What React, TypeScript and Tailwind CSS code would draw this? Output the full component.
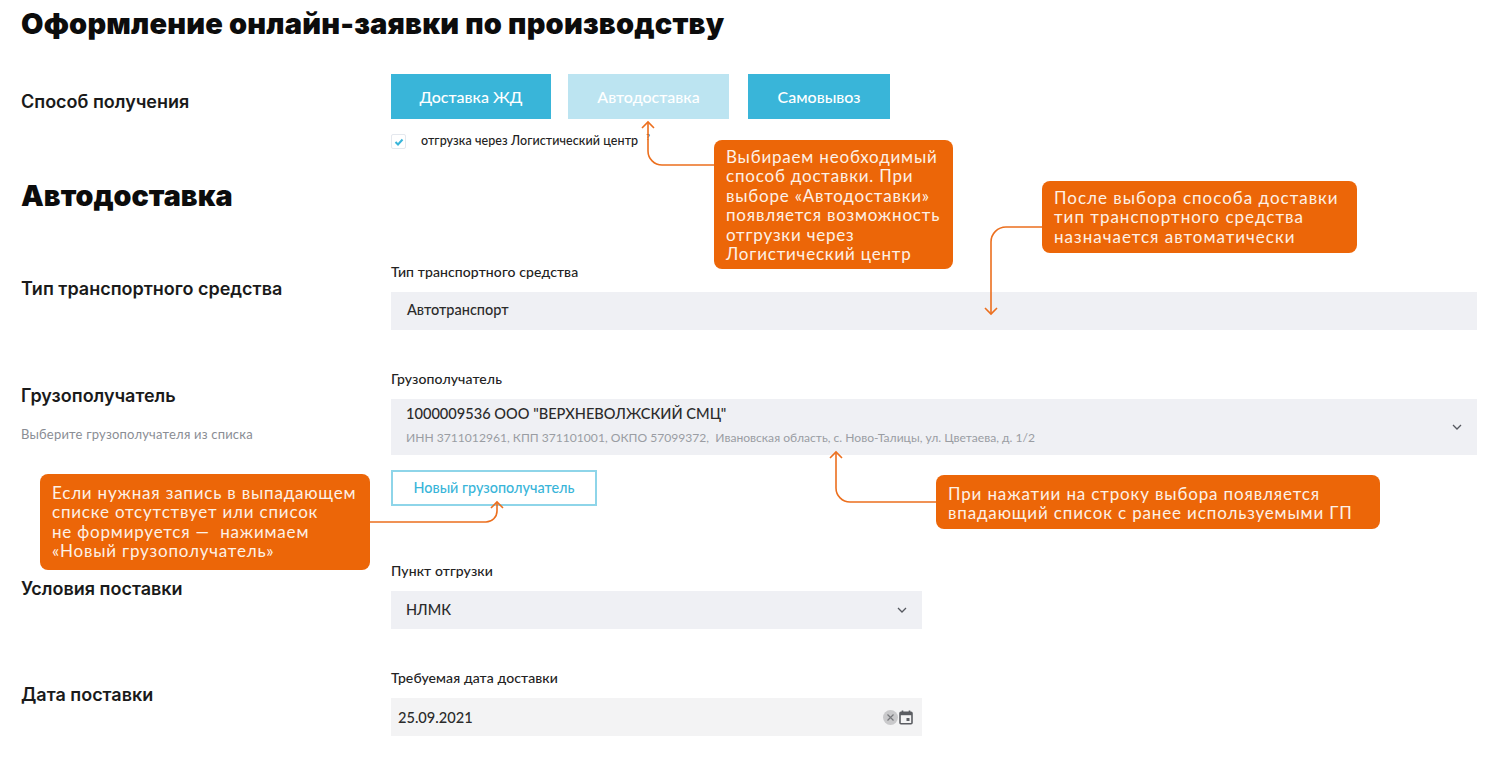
import React from "react";

const font = { fontFamily: '"Lato", "Noto Sans", sans-serif' };

function Callout({ className, children }: { className: string; children: React.ReactNode }) {
  return (
    <div className={`absolute rounded-lg bg-[#ec6608] pl-3 text-[17px] leading-[19.4px] whitespace-nowrap text-[#fdf1e6] ${className}`}>
      {children}
    </div>
  );
}

function Row({ label, sub, top, children }: { label: string; sub?: string; top: string; children: React.ReactNode }) {
  return (
    <div className="flex">
      <div className={`w-[370px] shrink-0 ${top}`}>
        <div className="font-['Inter'] text-[18px] leading-[22px] font-semibold text-[#1a1a1a]">{label}</div>
        {sub && <div className="mt-[19px] text-[13px] leading-[16px] tracking-[0.2px] text-[#8a8d94]">{sub}</div>}
      </div>
      <div className="min-w-0 flex-1">{children}</div>
    </div>
  );
}

function FieldLabel({ children }: { children: React.ReactNode }) {
  return <div className="h-[29px] text-[14px] leading-[18px] font-medium tracking-[0.1px] text-[#222]">{children}</div>;
}

function Chevron() {
  return (
    <svg width="12" height="12" viewBox="0 0 12 12" fill="none" stroke="#55585f" strokeWidth="1.3">
      <path d="M2 4l4 4 4-4" />
    </svg>
  );
}

export default function App() {
  return (
    <div className="relative h-[762px] w-[1492px] overflow-hidden bg-white px-[21px]" style={font}>
      <h1 className="h-[74px] pt-[4px] font-['Inter'] text-[29px] leading-[40px] font-black tracking-[0.18px] text-[#0c0c0c]">
        Оформление онлайн-заявки по производству
      </h1>

      <Row label="Способ получения" top="pt-[17px]">
        <div className="flex text-[16px] font-medium text-white">
          <div className="flex h-[45px] w-[160px] items-center justify-center bg-[#39b5d9]">Доставка ЖД</div>
          <div className="ml-[17px] flex h-[45px] w-[161px] items-center justify-center bg-[#bce4f1]">Автодоставка</div>
          <div className="ml-[19px] flex h-[45px] w-[142px] items-center justify-center bg-[#39b5d9]">Самовывоз</div>
        </div>
        <div className="mt-[14px] flex h-[17px] items-center">
          <div className="flex h-[15px] w-[15px] items-center justify-center rounded-[2px] border border-[#e4e8ee] bg-white">
            <svg width="10" height="10" viewBox="0 0 10 10" fill="none" stroke="#39b5d9" strokeWidth="2">
              <path d="M1.5 5l2.5 2.5 4.5-5" />
            </svg>
          </div>
          <span className="ml-[15px] text-[12.5px] font-medium tracking-[0.08px] text-[#222]">отгрузка через Логистический центр</span>
          <span className="mb-[10px] ml-[8px] text-[8px] text-[#222]">?</span>
        </div>
      </Row>

      <h2 className="mt-[14px] h-[99px] font-['Inter'] text-[28.7px] leading-[64px] font-black text-[#0c0c0c]">Автодоставка</h2>

      <Row label="Тип транспортного средства" top="pt-[15px]">
        <FieldLabel>Тип транспортного средства</FieldLabel>
        <div className="flex h-[38px] w-[1086px] items-center bg-[#eff0f4] px-[16px] pb-[2px] text-[14.5px] font-medium text-[#2b2b2b]">
          Автотранспорт
        </div>
      </Row>

      <div className="h-[40px]" />

      <Row label="Грузополучатель" sub="Выберите грузополучателя из списка" top="pt-[15px]">
        <FieldLabel>Грузополучатель</FieldLabel>
        <div className="flex h-[56px] w-[1086px] items-center justify-between bg-[#eff0f4] pr-[14px] pl-[15px]">
          <div className="self-start pt-[5px]">
            <div className="text-[14.6px] leading-[20px] font-medium text-[#2b2b2b]">1000009536 ООО "ВЕРХНЕВОЛЖСКИЙ СМЦ"</div>
            <div className="mt-[6px] text-[12.1px] leading-[16px] text-[#9a9da3]">
              ИНН 3711012961, КПП 371101001, ОКПО 57099372,&nbsp; Ивановская область, с. Ново-Талицы, ул. Цветаева, д. 1/2
            </div>
          </div>
          <Chevron />
        </div>
        <div className="mt-[15px] flex h-[36px] w-[206px] items-center justify-center border-2 border-[#8ed5e9] text-[14.4px] font-medium text-[#39b5d9]">
          Новый грузополучатель
        </div>
      </Row>

      <div className="h-[56px]" />

      <Row label="Условия поставки" top="pt-[16px]">
        <FieldLabel>Пункт отгрузки</FieldLabel>
        <div className="flex h-[38px] w-[531px] items-center justify-between bg-[#eff0f4] pr-[14px] pl-[15px] text-[14.5px] font-medium text-[#2b2b2b]">
          НЛМК
          <Chevron />
        </div>
      </Row>

      <div className="h-[40px]" />

      <Row label="Дата поставки" top="pt-[15px]">
        <FieldLabel>Требуемая дата доставки</FieldLabel>
        <div className="flex h-[38px] w-[531px] items-center justify-between bg-[#f3f3f4] pr-[9px] pl-[7px] text-[14.6px] font-medium text-[#2b2b2b]">
          <span className="pt-[1px]">25.09.2021</span>
          <div className="flex items-center gap-[1px]">
            <svg width="15" height="15" viewBox="0 0 15 15">
              <circle cx="7.5" cy="7.5" r="7.5" fill="#c9c9cb" />
              <path d="M4.5 4.5l6 6M10.5 4.5l-6 6" stroke="#77787c" strokeWidth="1.2" />
            </svg>
            <svg width="14" height="15" viewBox="0 0 14 15" fill="none">
              <path d="M3.5 0.5v2.5M10.5 0.5v2.5" stroke="#5b5d62" strokeWidth="1.6" />
              <rect x="1" y="2.2" width="12" height="11.6" rx="1" stroke="#5b5d62" strokeWidth="1.6" />
              <rect x="1" y="2.2" width="12" height="3" fill="#5b5d62" />
              <rect x="7.5" y="8" width="3" height="3" fill="#5b5d62" />
            </svg>
          </div>
        </div>
      </Row>

      {/* Annotation overlay */}
      <svg className="pointer-events-none absolute top-0 left-0" width="1492" height="762" fill="none" stroke="#ec6f1e" strokeWidth="1.6">
        <path d="M714 165H662a14 14 0 0 1-14-14V122" />
        <path d="M642 128l6-6 6 6" />
        <path d="M1042 227H1006a15 15 0 0 0-15 15V314" />
        <path d="M985 308l6 6 6-6" />
        <path d="M370 522H486a11 11 0 0 0 11-11V502" />
        <path d="M491 508l6-6 6 6" />
        <path d="M936 502H850a14 14 0 0 1-14-14V452" />
        <path d="M830 458l6-6 6 6" />
      </svg>

      <Callout className="top-[140px] left-[714px] h-[129px] w-[239px] pt-[7px] tracking-[0.8px]">
        Выбираем необходимый<br />способ доставки. При<br />выборе «Автодоставки»<br />появляется возможность<br />отгрузки через<br />Логистический центр
      </Callout>
      <Callout className="top-[181px] left-[1042px] h-[72px] w-[315px] pt-[7px] tracking-[1px]">
        После выбора способа доставки<br />тип транспортного средства<br />назначается автоматически
      </Callout>
      <Callout className="top-[474px] left-[40px] h-[96px] w-[330px] pt-[9px] tracking-[0.8px]">
        Если нужная запись в выпадающем<br />списке отсутствует или список<br />не формируется —&nbsp; нажимаем<br />«Новый грузополучатель»
      </Callout>
      <Callout className="top-[475px] left-[936px] h-[54px] w-[444px] pt-[9px] tracking-[0.85px]">
        При нажатии на строку выбора появляется<br />впадающий список с ранее используемыми ГП
      </Callout>
    </div>
  );
}
